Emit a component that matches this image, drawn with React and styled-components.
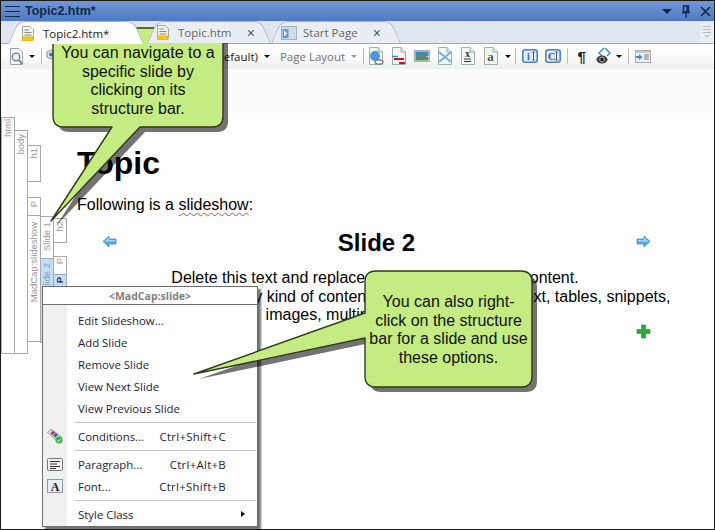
import React from "react";
import styled, { createGlobalStyle } from "styled-components";

const GlobalStyle = createGlobalStyle`
  html, body { margin: 0; padding: 0; background: #fff; }
  * { box-sizing: border-box; }
`;

const CalloutShape = ({ w, h, tail }) => (
  <CalloutSvg width={w} height={h} viewBox={`0 0 ${w} ${h}`}>
    <path d={tail} transform="translate(5 5)" fill="#000" opacity="0.55" />
    <path d={tail} fill="#c4ec82" stroke="#2f3a20" strokeWidth="1.4" strokeLinejoin="round" />
  </CalloutSvg>
);

const roundedBox = (w, h, r, tailPart) =>
  `M${r} 0H${w - r}Q${w} 0 ${w} ${r}V${h - r}Q${w} ${h} ${w - r} ${h}${tailPart}`;

const firstTail = (() => {
  const w = 170, h = 99, r = 11;
  return roundedBox(w, h, r, `H87L-2 193L59 ${h}H${r}Q0 ${h} 0 ${h - r}V${r}Q0 0 ${r} 0Z`);
})();

const secondTail = (() => {
  const w = 167, h = 116, r = 11;
  return roundedBox(w, h, r, `H${r}Q0 ${h} 0 ${h - r}V67L-171 103L0 42V${r}Q0 0 ${r} 0Z`);
})();

const Doc = ({ children }) => (
  <svg width="16" height="18" viewBox="0 0 16 18">
    <path d="M1.5 .5H10L14.5 5V17.5H1.5Z" fill="#f4f6f4" stroke="#9fb0ac" />
    <path d="M10 .5V5H14.5" fill="#dfe6e4" stroke="#9fb0ac" />
    {children}
  </svg>
);

const Magnifier = () => (
  <svg width="13" height="17" viewBox="0 0 13 17">
    <path d="M.5 .5H9L12.5 4V16.5H.5Z" fill="#f6f6f6" stroke="#9aa5a8" />
    <circle cx="6" cy="9" r="3.8" fill="#e6eef2" stroke="#6f7f86" strokeWidth="1.3" />
    <path d="M9 12L12 16" stroke="#6f7f86" strokeWidth="1.8" />
  </svg>
);

const StyleIcon = () => (
  <svg width="12" height="14" viewBox="0 0 12 14">
    <path d="M1 3L5 1L9 3V8L5 10L1 8Z" fill="#e7edf2" stroke="#7d8b95" />
    <circle cx="5" cy="5.5" r="2" fill="#2f7fc4" />
  </svg>
);

const TopicIcon = () => (
  <svg width="12" height="15" viewBox="0 0 12 15">
    <path d="M.5 .5H8L11.5 4V12.5H.5Z" fill="#f3f3ee" stroke="#a8a8a0" />
    <path d="M2.5 4H7M2.5 6.5H9.5M2.5 9H9.5" stroke="#8b8b85" />
    <rect x="0" y="11" width="11" height="4" fill="#fbcb00" stroke="#d99b00" strokeWidth=".6" />
  </svg>
);

const StartIcon = () => (
  <svg width="16" height="14" viewBox="0 0 16 14">
    <rect x=".5" y=".5" width="15" height="13" fill="#cfdbe6" stroke="#a4b2bf" />
    <rect x="1.5" y="3" width="6" height="9" fill="#5aa0d8" />
    <path d="M3 4.5L6.2 7.5L3 10.5Z" fill="#fff" />
  </svg>
);

const Caret = styled.span`
  display: inline-block;
  width: 0;
  height: 0;
  border-left: ${p => p.$size || 3.5}px solid transparent;
  border-right: ${p => p.$size || 3.5}px solid transparent;
  border-top: ${p => p.$size || 3.5}px solid ${p => p.$color || "#111"};
`;

const ClassBadge = ({ label }) => (
  <svg width="16" height="14" viewBox="0 0 16 14">
    <rect x=".8" y=".8" width="14.4" height="12.4" rx="2.5" fill="#dfe9f8" stroke="#4f80cc" strokeWidth="1.6" />
    <text x="6.5" y="10.5" fontFamily="Liberation Serif, serif" fontSize="10" fontWeight="700" textAnchor="middle" fill="#2f5b9c">
      {label}
    </text>
    <path d="M11.5 3V11M10.3 3H12.7M10.3 11H12.7" stroke="#333" strokeWidth=".8" />
  </svg>
);

const ToolbarIcons = {
  link: (
    <Doc>
      <circle cx="7" cy="9" r="5" fill="#4f96e0" />
      <ellipse cx="11" cy="15" rx="4" ry="2.2" fill="none" stroke="#777" strokeWidth="1.2" />
    </Doc>
  ),
  compare: (
    <Doc>
      <path d="M1 9.5H7" stroke="#3f8ad4" strokeWidth="1.5" />
      <rect x="3" y="11" width="10" height="2" fill="#cc1122" />
      <rect x="8" y="15" width="6" height="2" fill="#cc1122" />
    </Doc>
  ),
  image: (
    <svg width="16" height="12" viewBox="0 0 16 12">
      <rect x=".5" y=".5" width="15" height="11" fill="#dfe7ec" stroke="#9fb0b8" />
      <rect x="1.5" y="1.5" width="13" height="4.5" fill="#3e86c8" />
      <path d="M1.5 6L6 4.5L14.5 7V10.5H1.5Z" fill="#5f8a66" />
    </svg>
  ),
  cross: (
    <Doc>
      <path d="M2 5L14 15M14 5L2 15" stroke="#6db4d8" strokeWidth="2" />
    </Doc>
  ),
  snippet: (
    <Doc>
      <text x="7.5" y="10" fontFamily="Liberation Serif, serif" fontSize="10" fontWeight="700" textAnchor="middle" fill="#333">x</text>
      <path d="M4 12H11M4 14.5H11" stroke="#333" />
    </Doc>
  ),
  letter: (
    <Doc>
      <text x="7.5" y="14" fontFamily="Liberation Serif, serif" fontSize="13" fontWeight="700" textAnchor="middle" fill="#555">a</text>
    </Doc>
  ),
  layout: (
    <svg width="16" height="13" viewBox="0 0 16 13">
      <rect x=".5" y=".5" width="15" height="12" fill="#f1f1f1" stroke="#a9a9a9" />
      <rect x="1" y="1" width="14" height="2" fill="#c9c9c9" />
      <path d="M9 5H14M9 7H14M9 9H14" stroke="#7b7b7b" />
      <path d="M1 6H4V4L7.5 7L4 10V8H1Z" fill="#2f8fdc" />
    </svg>
  ),
  markers: (
    <svg width="17" height="18" viewBox="0 0 17 18">
      <path d="M8 1L3 6L6 9M9 1L14 6L11 9" fill="none" stroke="#2b86dc" strokeWidth="1.3" />
      <ellipse cx="6" cy="12.5" rx="5.5" ry="4" fill="#3a3a3a" />
      <ellipse cx="6" cy="12.5" rx="3" ry="3" fill="#8b8b8b" />
      <circle cx="6" cy="12.5" r="1.6" fill="#111" />
    </svg>
  ),
};

const ArrowIcon = ({ flip }) => (
  <svg width="15" height="13" viewBox="0 0 15 13" style={flip ? { transform: "scaleX(-1)" } : undefined}>
    <path d="M1 6.5L7 1V4H14V9H7V12Z" fill="#5aa9e6" stroke="#3f88c6" strokeWidth=".8" />
    <path d="M2.5 6.5L7 2.5V5H13V6.5Z" fill="#a5d4f5" />
  </svg>
);

const PlusIcon = () => (
  <svg width="15" height="15" viewBox="0 0 15 15">
    <path d="M5.5 1H9.5V5.5H14V9.5H9.5V14H5.5V9.5H1V5.5H5.5Z" fill="#2aa838" stroke="#1f8a2c" strokeWidth=".6" />
  </svg>
);

const ConditionsIcon = () => (
  <svg width="16" height="16" viewBox="0 0 16 16">
    <path d="M.5 4.5L4 1L15 9.5L11.5 14Z" fill="#d0d6da" stroke="#7f8890" strokeWidth=".7" />
    <path d="M3.5 5.5L6 2.8L8.2 4.5L5.6 7.2Z" fill="#d23030" />
    <path d="M6.2 7.6L8.8 5L11 6.8L8.3 9.4Z" fill="#2f63c8" />
    <circle cx="12" cy="12" r="3.6" fill="#3fb34a" />
    <path d="M10.2 12L11.6 13.6L14 10.8" fill="none" stroke="#fff" strokeWidth="1" />
  </svg>
);

const ParagraphIcon = () => (
  <svg width="16" height="13" viewBox="0 0 16 13">
    <rect x=".5" y=".5" width="15" height="12" rx="1" fill="#f0f0f0" stroke="#777" />
    <path d="M3 3.5H13M3 6H10M3 8.5H13M3 10.5H9" stroke="#333" />
  </svg>
);

const FontIcon = () => (
  <svg width="16" height="14" viewBox="0 0 16 14">
    <rect x=".5" y=".5" width="15" height="13" fill="#e8eef2" stroke="#8a9aa5" />
    <text x="8" y="11.5" fontFamily="Liberation Serif, serif" fontSize="12" fontWeight="700" textAnchor="middle" fill="#222">A</text>
  </svg>
);

const menuItems = [
  { label: "Edit Slideshow..." },
  { label: "Add Slide" },
  { label: "Remove Slide" },
  { label: "View Next Slide" },
  { label: "View Previous Slide" },
  { separator: true },
  { label: "Conditions...", shortcut: "Ctrl+Shift+C", icon: <ConditionsIcon /> },
  { separator: true },
  { label: "Paragraph...", shortcut: "Ctrl+Alt+B", icon: <ParagraphIcon /> },
  { label: "Font...", shortcut: "Ctrl+Shift+B", icon: <FontIcon /> },
  { separator: true },
  { label: "Style Class", submenu: true },
];

const App = () => {
  return (
    <>
      <GlobalStyle />
      <Window>
        <TitleBar>
          <Hamburger>
            <i />
            <i />
            <i />
          </Hamburger>
          <TitleText>Topic2.htm*</TitleText>
          <TitleControls>
            <Caret $color="#10284f" $size={5} />
            <svg width="10" height="13" viewBox="0 0 10 13">
              <path d="M2.5 1H7.5V7H2.5ZM1 7.5H9M5 8V13M6 1.5V7" fill="none" stroke="#10284f" strokeWidth="1.3" />
            </svg>
            <svg width="11" height="11" viewBox="0 0 11 11">
              <path d="M1 1L10 10M10 1L1 10" stroke="#10284f" strokeWidth="1.6" />
            </svg>
          </TitleControls>
        </TitleBar>

        <TabStrip>
          <Tab $active $width={136} $ml={7} $pl={14} $gap={9}>
            <TopicIcon />
            <TabLabel $active>Topic2.htm*</TabLabel>
          </Tab>
          <Tab $width={124} $ml={3} $pl={10} $gap={9} $pr={16}>
            <TopicIcon />
            <TabLabel>Topic.htm</TabLabel>
            <TabClose>×</TabClose>
          </Tab>
          <Tab $width={130} $ml={0} $pl={10} $gap={6} $pr={20}>
            <StartIcon />
            <TabLabel>Start Page</TabLabel>
            <TabClose>×</TabClose>
          </Tab>
          <OverflowButton>
            <i />
            <i />
            <i />
            <Caret $color="#c4cedb" />
          </OverflowButton>
        </TabStrip>

        <Toolbar>
          <ToolSlot $ml={9} $w={13}>
            <Magnifier />
          </ToolSlot>
          <ToolSlot $ml={1} $w={16}>
            <Caret />
          </ToolSlot>
          <Separator $ml={1} />
          <ToolSlot $ml={4} $w={12}>
            <StyleIcon />
          </ToolSlot>
          <ToolText $ml={154}>(Default)</ToolText>
          <ToolSlot $ml={4} $w={10}>
            <Caret />
          </ToolSlot>
          <ToolText $ml={8} $muted>
            Page Layout
          </ToolText>
          <ToolSlot $ml={4} $w={10}>
            <Caret $color="#999" />
          </ToolSlot>
          <Separator $ml={4} />
          <ToolSlot>{ToolbarIcons.link}</ToolSlot>
          <ToolSlot>{ToolbarIcons.compare}</ToolSlot>
          <ToolSlot>{ToolbarIcons.image}</ToolSlot>
          <ToolSlot>{ToolbarIcons.cross}</ToolSlot>
          <ToolSlot>{ToolbarIcons.snippet}</ToolSlot>
          <ToolSlot>{ToolbarIcons.letter}</ToolSlot>
          <ToolSlot $ml={1} $w={10}>
            <Caret />
          </ToolSlot>
          <Separator $ml={2} />
          <ToolSlot $ml={2}>
            <ClassBadge label="i" />
          </ToolSlot>
          <ToolSlot>
            <ClassBadge label="C" />
          </ToolSlot>
          <Separator $ml={3} />
          <ToolSlot $ml={2}>
            <Pilcrow>¶</Pilcrow>
          </ToolSlot>
          <ToolSlot>{ToolbarIcons.markers}</ToolSlot>
          <ToolSlot $ml={-2} $w={10}>
            <Caret />
          </ToolSlot>
          <Separator $ml={4} />
          <ToolSlot $ml={2}>{ToolbarIcons.layout}</ToolSlot>
        </Toolbar>

        <Editor>
          <TopStrip />
          <EditorRow>
            <Structure>
              <BarColumn $top={4}>
                <Bar $height={237}>
                  <BarLabel $pad={1}>html</BarLabel>
                </Bar>
              </BarColumn>
              <BarColumn $top={17}>
                <Bar $height={224}>
                  <BarLabel $pad={3}>body</BarLabel>
                </Bar>
              </BarColumn>
              <BarColumn $top={32}>
                <Bar $height={37}>
                  <BarLabel $pad={2}>h1</BarLabel>
                </Bar>
                <Bar $height={19} $mt={16}>
                  <BarLabel $pad={3}>P</BarLabel>
                </Bar>
                <Bar $height={127}>
                  <BarLabel $pad={6}>MadCap:slideshow</BarLabel>
                </Bar>
              </BarColumn>
              <BarColumn $top={103}>
                <Bar $height={43}>
                  <BarLabel $pad={5}>Slide 1</BarLabel>
                </Bar>
                <Bar $height={85} $selected>
                  <BarLabel $pad={4}>Slide 2</BarLabel>
                </Bar>
              </BarColumn>
              <BarColumn $top={105}>
                <Bar $height={25}>
                  <BarLabel $pad={2}>h2</BarLabel>
                </Bar>
                <Bar $height={19} $mt={14}>
                  <BarLabel $pad={1}>P</BarLabel>
                </Bar>
                <Bar $height={19} $selected>
                  <BarLabel $pad={2} $strong>
                    P
                  </BarLabel>
                </Bar>
              </BarColumn>
            </Structure>

            <Page>
              <Heading>Topic</Heading>
              <Intro>
                Following is a <Squiggle>slideshow</Squiggle>:
              </Intro>
              <SlideHeader>
                <ArrowIcon />
                <SlideTitle>Slide 2</SlideTitle>
                <ArrowIcon flip />
              </SlideHeader>
              <SlideBody>
                Delete this text and replace it with your own slide content.
                <br />
                You can insert almost any kind of content in the slide, such as text, tables, snippets,
                <br />
                images, multimedia, and more.
              </SlideBody>
              <AddRow>
                <PlusIcon />
              </AddRow>
            </Page>
          </EditorRow>
        </Editor>

        <ContextMenu>
          <MenuHeader>&lt;MadCap:slide&gt;</MenuHeader>
          <MenuList>
            {menuItems.map((item, i) =>
              item.separator ? (
                <MenuSeparator key={i} />
              ) : (
                <MenuItem key={i}>
                  <MenuIcon>{item.icon}</MenuIcon>
                  <MenuLabel>{item.label}</MenuLabel>
                  {item.shortcut && <MenuShortcut>{item.shortcut}</MenuShortcut>}
                  {item.submenu && <SubmenuArrow />}
                </MenuItem>
              )
            )}
          </MenuList>
        </ContextMenu>

        <Callout $left={52} $top={27} $width={170} $height={99} $pad={16}>
          <CalloutShape w={170} h={99} tail={firstTail} />
          <CalloutText>
            You can navigate to a
            <br />
            specific slide by
            <br />
            clicking on its
            <br />
            structure bar.
          </CalloutText>
        </Callout>

        <Callout $left={364} $top={270} $width={167} $height={116} $pad={22}>
          <CalloutShape w={167} h={116} tail={secondTail} />
          <CalloutText>
            You can also right-
            <br />
            click on the structure
            <br />
            bar for a slide and use
            <br />
            these options.
          </CalloutText>
        </Callout>
      </Window>
    </>
  );
};

const Window = styled.div`
  position: relative;
  width: 715px;
  height: 530px;
  overflow: hidden;
  background: #fff;
  border: 1px solid #1a1a1a;
  display: flex;
  flex-direction: column;
  font-family: "Liberation Sans", Arial, sans-serif;
`;

const TitleBar = styled.div`
  height: 20px;
  flex: none;
  display: flex;
  align-items: center;
  padding: 0 3px 0 4px;
  background: linear-gradient(#7297d4, #4d7bc0);
`;
const Hamburger = styled.div`
  width: 15px;
  display: flex;
  flex-direction: column;
  gap: 4px;
  i {
    display: block;
    height: 1px;
    background: #10284f;
  }
`;
const TitleText = styled.div`
  margin-left: 5px;
  font-size: 12.5px;
  font-weight: 700;
  color: #10284f;
`;
const TitleControls = styled.div`
  margin-left: auto;
  display: flex;
  align-items: center;
  gap: 9px;
`;

const TabStrip = styled.div`
  height: 23px;
  flex: none;
  display: flex;
  align-items: flex-end;
  background: #dfe6f0;
  border-bottom: 1px solid #a9a9a9;
  position: relative;
`;
const Tab = styled.div`
  position: relative;
  width: ${p => p.$width}px;
  margin-left: ${p => p.$ml}px;
  height: ${p => (p.$active ? 23 : 22)}px;
  margin-bottom: ${p => (p.$active ? -1 : 0)}px;
  display: flex;
  align-items: center;
  gap: ${p => p.$gap}px;
  padding: 1px ${p => p.$pr || 16}px 0 ${p => p.$pl}px;
  z-index: ${p => (p.$active ? 2 : 1)};
  &::before,
  &::after {
    content: "";
    position: absolute;
    top: 0;
    bottom: 0;
    width: 50%;
    background: ${p => (p.$active ? "#fff" : "#e9eef5")};
    border-top: 1px solid #a9b2bd;
    z-index: -1;
  }
  &::before {
    left: 0;
    transform-origin: bottom left;
    transform: skewX(-24deg);
    border-left: 1px solid #a9b2bd;
    border-top-left-radius: 7px;
  }
  &::after {
    right: 0;
    transform-origin: bottom right;
    transform: skewX(24deg);
    border-right: 1px solid #a9b2bd;
    border-top-right-radius: 7px;
  }
`;
const TabLabel = styled.span`
  font-family: "Open Sans", sans-serif;
  font-size: 11.5px;
  color: ${p => (p.$active ? "#222" : "#666")};
  white-space: nowrap;
`;
const TabClose = styled.span`
  margin-left: auto;
  font-size: 14px;
  color: #555;
`;
const OverflowButton = styled.div`
  position: absolute;
  right: 0;
  top: 1px;
  bottom: 0;
  width: 14px;
  background: #e9eef5;
  display: flex;
  flex-direction: column;
  align-items: center;
  gap: 2px;
  padding-top: 4px;
  i {
    display: block;
    width: 8px;
    height: 1px;
    background: #b4bfcd;
  }
`;

const Toolbar = styled.div`
  height: 25px;
  flex: none;
  display: flex;
  align-items: center;
  padding-bottom: 1px;
  background: linear-gradient(#fff 30%, #efefef);
`;
const ToolSlot = styled.div`
  flex: none;
  width: ${p => p.$w || 23}px;
  margin-left: ${p => p.$ml || 0}px;
  display: flex;
  align-items: center;
  justify-content: center;
`;
const Separator = styled.div`
  flex: none;
  width: 1px;
  height: 16px;
  margin-left: ${p => p.$ml || 0}px;
  background: #bdbdbd;
`;
const ToolText = styled.span`
  margin-left: ${p => p.$ml || 0}px;
  font-family: "Open Sans", sans-serif;
  font-size: 11.5px;
  white-space: nowrap;
  color: ${p => (p.$muted ? "#77707f" : "#222")};
`;
const Pilcrow = styled.span`
  font-family: "Liberation Sans", sans-serif;
  font-size: 15px;
  font-weight: 700;
  color: #222;
`;

const Editor = styled.div`
  flex: 1;
  display: flex;
  flex-direction: column;
  min-height: 0;
`;
const TopStrip = styled.div`
  height: 44px;
  flex: none;
  background: #fcfcfc;
`;
const EditorRow = styled.div`
  flex: 1;
  display: flex;
  min-height: 0;
`;

const Structure = styled.div`
  width: 64px;
  flex: none;
  display: flex;
  align-items: flex-start;
`;
const BarColumn = styled.div`
  width: 14px;
  margin-right: -1px;
  flex: none;
  padding-top: ${p => p.$top}px;
  display: flex;
  flex-direction: column;
`;
const Bar = styled.div`
  height: ${p => p.$height}px;
  margin-top: ${p => p.$mt || 0}px;
  border: 1px solid #a8a8a8;
  margin-bottom: -1px;
  background: ${p => (p.$selected ? "#bfdfff" : "#fff")};
  display: flex;
  justify-content: center;
  overflow: hidden;
`;
const BarLabel = styled.span`
  writing-mode: vertical-rl;
  transform: rotate(180deg);
  font-size: 9.5px;
  line-height: 12px;
  padding-bottom: ${p => p.$pad}px;
  align-self: flex-start;
  color: ${p => (p.$strong ? "#333" : "#999")};
  font-weight: ${p => (p.$strong ? 700 : 400)};
  white-space: nowrap;
`;

const Page = styled.div`
  width: 596px;
  margin-left: 12px;
  padding-top: 32px;
  color: #000;
`;
const Heading = styled.h1`
  margin: 0;
  font-size: 32px;
  line-height: 37px;
  font-weight: 700;
`;
const Intro = styled.p`
  margin: 14px 0 0;
  font-size: 16px;
  line-height: 18px;
`;
const Squiggle = styled.span`
  text-decoration: underline wavy #c05050 1px;
  text-underline-offset: 2px;
`;
const SlideHeader = styled.div`
  margin-top: 15px;
  padding: 0 22px 0 25px;
  height: 28px;
  display: flex;
  align-items: center;
  justify-content: space-between;
  svg {
    margin-bottom: 4px;
  }
`;
const SlideTitle = styled.h2`
  margin: 0;
  font-size: 24px;
  line-height: 28px;
  font-weight: 700;
`;
const SlideBody = styled.p`
  margin: 12px 0 0;
  text-align: center;
  font-size: 16px;
  line-height: 18.5px;
  white-space: nowrap;
`;
const AddRow = styled.div`
  margin-top: -1px;
  padding-right: 22px;
  display: flex;
  justify-content: flex-end;
`;

const ContextMenu = styled.div`
  position: absolute;
  left: 41px;
  top: 285px;
  width: 216px;
  height: 241px;
  background: #fff;
  border: 1px solid #6e6e6e;
  box-shadow: 3px 3px 2px rgba(0, 0, 0, 0.55);
  display: flex;
  flex-direction: column;
`;
const MenuHeader = styled.div`
  height: 18px;
  flex: none;
  display: flex;
  align-items: center;
  justify-content: center;
  font-family: "Open Sans", sans-serif;
  font-size: 10.5px;
  font-weight: 700;
  color: #808080;
  border-bottom: 1px solid #6e6e6e;
`;
const MenuList = styled.div`
  flex: 1;
  padding-top: 4px;
  background: linear-gradient(90deg, #f0f0f0 24px, #fff 24px);
`;
const MenuItem = styled.div`
  height: 22px;
  display: flex;
  align-items: center;
  padding-right: 12px;
  font-family: "Open Sans", sans-serif;
  font-size: 11.4px;
  color: #1c1c3a;
  white-space: nowrap;
`;
const MenuIcon = styled.span`
  flex: none;
  width: 35px;
  padding-left: 4px;
  display: flex;
  align-items: center;
`;
const MenuLabel = styled.span``;
const MenuShortcut = styled.span`
  margin-left: auto;
  padding-right: 19px;
  letter-spacing: 0.3px;
`;
const SubmenuArrow = styled.span`
  margin-left: auto;
  width: 0;
  height: 0;
  border-top: 3.5px solid transparent;
  border-bottom: 3.5px solid transparent;
  border-left: 4px solid #111;
`;
const MenuSeparator = styled.div`
  height: 1px;
  margin: 3px 1px 2px 32px;
  background: #c4c4c4;
`;

const Callout = styled.div`
  position: absolute;
  left: ${p => p.$left}px;
  top: ${p => p.$top}px;
  width: ${p => p.$width}px;
  height: ${p => p.$height}px;
  padding-top: ${p => p.$pad}px;
`;
const CalloutSvg = styled.svg`
  position: absolute;
  left: 0;
  top: 0;
  overflow: visible;
`;
const CalloutText = styled.div`
  position: relative;
  text-align: center;
  font-size: 16px;
  line-height: 18.5px;
  color: #111;
`;

export default App;
